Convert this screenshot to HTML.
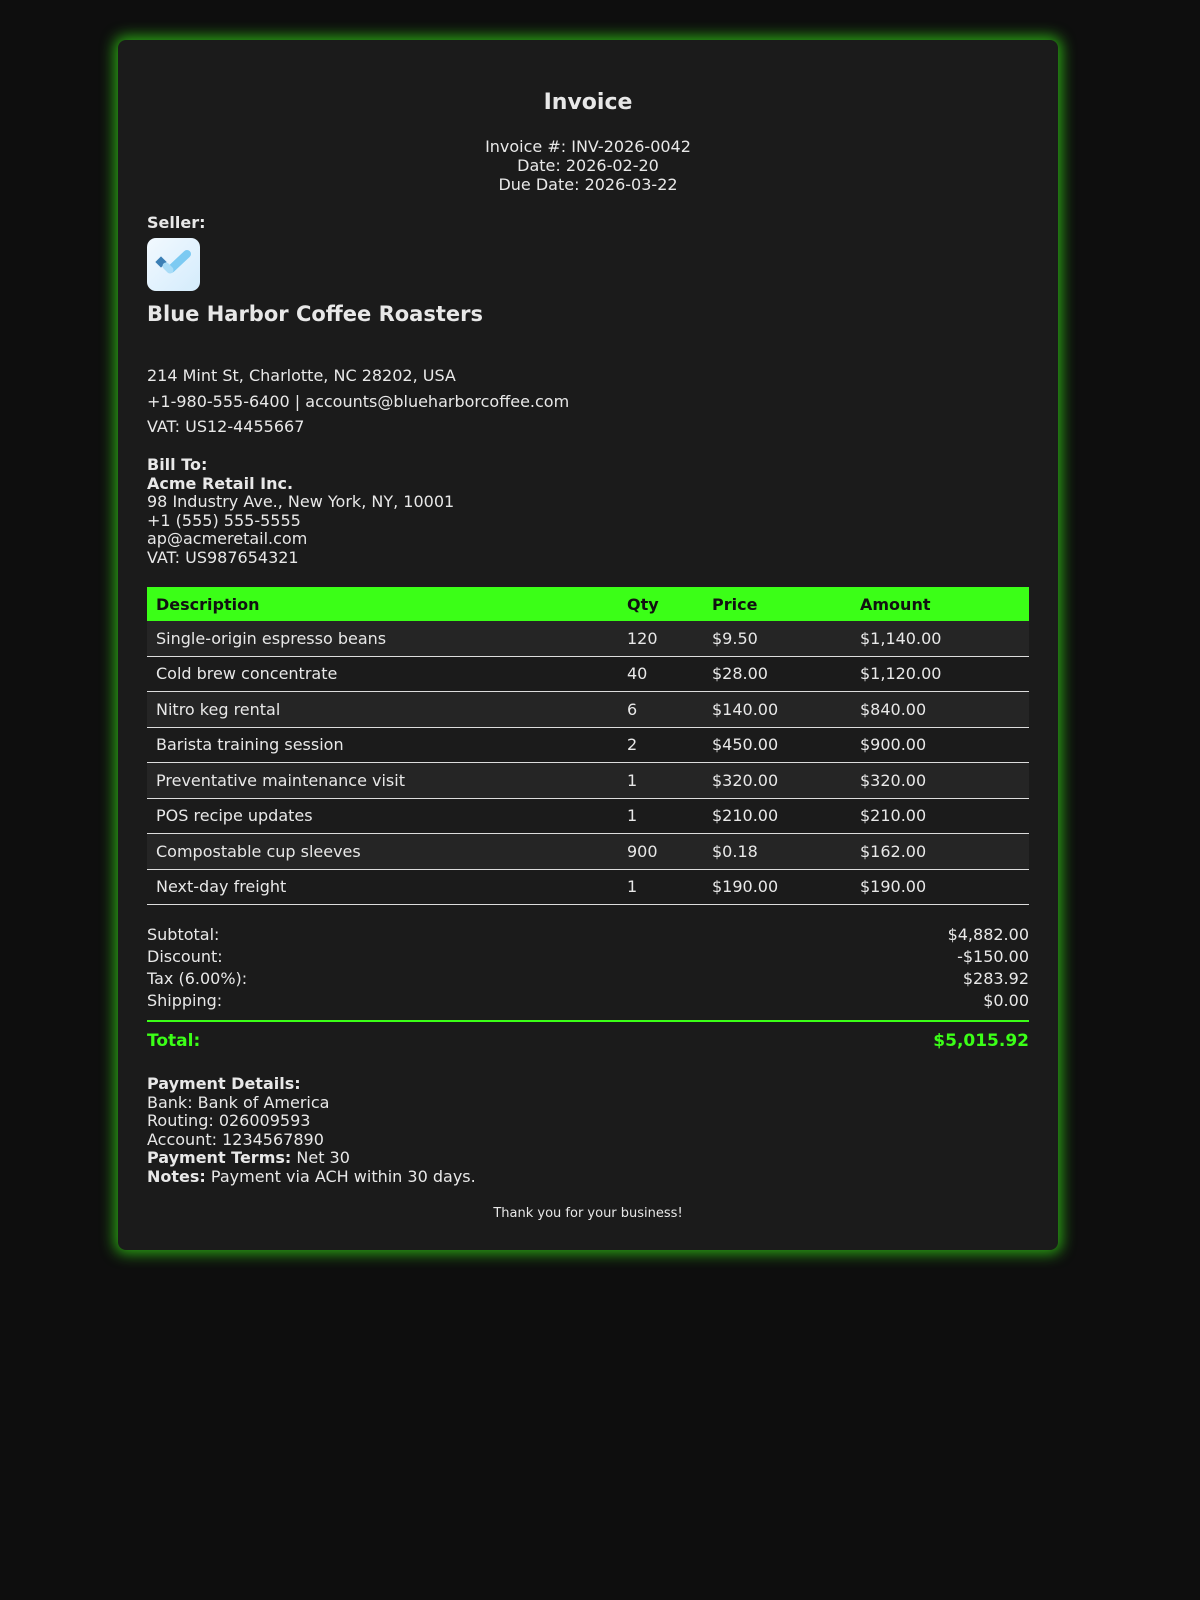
<!DOCTYPE html>
<html><head><meta charset="utf-8"><style>
html,body{margin:0;padding:0;background:#0e0e0e;}
body{width:1200px;height:1600px;font-family:"DejaVu Sans",Verdana,sans-serif;color:#e8e8e8;font-size:16px;}
.c{position:absolute;left:118px;top:40px;width:882px;height:1210px;padding:0 29px 0 29px;background:#1b1b1b;border-radius:8px;box-shadow:0 0 14px 4px #2aa014;}
.a{position:absolute;white-space:nowrap;}
.ctr{left:0;width:940px;text-align:center;}
b{font-weight:bold;}
table{position:absolute;left:29px;top:547px;width:882px;border-collapse:collapse;}
th{background:#3bff17;color:#111;text-align:left;font-weight:bold;height:34px;padding:0 9px;}
td{height:34.5px;padding:0 9px;border-bottom:1px solid #ddd;}
tr.o td{background:#252525;}
.r{position:absolute;left:29px;width:882px;display:flex;justify-content:space-between;}
</style></head><body>
<div class="c">
<div class="a ctr" style="top:50px;font-size:22px;font-weight:bold;">Invoice</div>
<div class="a ctr" style="top:97px;line-height:19px;">Invoice #: INV-2026-0042<br>Date: 2026-02-20<br>Due Date: 2026-03-22</div>
<div class="a" style="left:29px;top:173px;font-weight:bold;">Seller:</div>
<div class="a" style="left:29px;top:198px;width:53px;height:53px;border-radius:9px;background:linear-gradient(135deg,#f2f9ff,#d4ecfc);">
<svg width="53" height="53" viewBox="0 0 53 53"><rect x="10" y="20" width="8" height="8" fill="#3b7fb5" transform="rotate(45 14 24)"/><path d="M24 31 L40 16" stroke="#7ccaf2" stroke-width="8" stroke-linecap="round"/><path d="M19 28 L23 32" stroke="#a8dcf7" stroke-width="7" stroke-linecap="round"/></svg></div>
<div class="a" style="left:29px;top:262px;font-size:21px;font-weight:bold;">Blue Harbor Coffee Roasters</div>
<div class="a" style="left:29px;top:323px;line-height:25.5px;">214 Mint St, Charlotte, NC 28202, USA<br>+1-980-555-6400 | accounts@blueharborcoffee.com<br>VAT: US12-4455667</div>
<div class="a" style="left:29px;top:416px;line-height:18.5px;"><b>Bill To:</b><br><b>Acme Retail Inc.</b><br>98 Industry Ave., New York, NY, 10001<br>+1 (555) 555-5555<br>ap@acmeretail.com<br>VAT: US987654321</div>
<table>
<tr><th style="width:453px">Description</th><th style="width:67px">Qty</th><th style="width:130px">Price</th><th>Amount</th></tr>
<tr class="o"><td>Single-origin espresso beans</td><td>120</td><td>$9.50</td><td>$1,140.00</td></tr>
<tr><td>Cold brew concentrate</td><td>40</td><td>$28.00</td><td>$1,120.00</td></tr>
<tr class="o"><td>Nitro keg rental</td><td>6</td><td>$140.00</td><td>$840.00</td></tr>
<tr><td>Barista training session</td><td>2</td><td>$450.00</td><td>$900.00</td></tr>
<tr class="o"><td>Preventative maintenance visit</td><td>1</td><td>$320.00</td><td>$320.00</td></tr>
<tr><td>POS recipe updates</td><td>1</td><td>$210.00</td><td>$210.00</td></tr>
<tr class="o"><td>Compostable cup sleeves</td><td>900</td><td>$0.18</td><td>$162.00</td></tr>
<tr><td>Next-day freight</td><td>1</td><td>$190.00</td><td>$190.00</td></tr>
</table>
<div class="r" style="top:885px"><span>Subtotal:</span><span>$4,882.00</span></div>
<div class="r" style="top:907px"><span>Discount:</span><span>-$150.00</span></div>
<div class="r" style="top:929px"><span>Tax (6.00%):</span><span>$283.92</span></div>
<div class="r" style="top:951px"><span>Shipping:</span><span>$0.00</span></div>
<div class="a" style="left:29px;top:980px;width:882px;border-top:2px solid #3bff17;"></div>
<div class="r" style="top:991px;color:#3bff17;font-weight:bold;font-size:17px;"><span>Total:</span><span>$5,015.92</span></div>
<div class="a" style="left:29px;top:1035px;line-height:18.5px;"><b>Payment Details:</b><br>Bank: Bank of America<br>Routing: 026009593<br>Account: 1234567890<br><b>Payment Terms:</b> Net 30<br><b>Notes:</b> Payment via ACH within 30 days.</div>
<div class="a ctr" style="top:1166px;font-size:13px;">Thank you for your business!</div>
</div>
</body></html>
